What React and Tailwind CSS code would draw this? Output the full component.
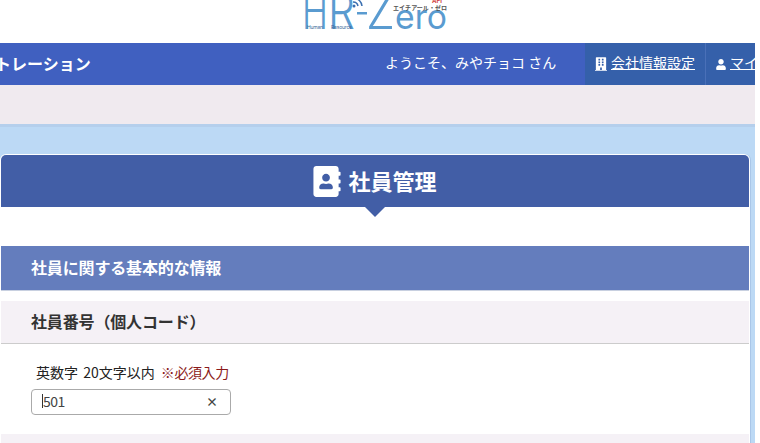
import { FaAddressBook, FaBuilding, FaUser } from "react-icons/fa";

const jp = "font-['Noto_Sans_CJK_JP','Noto_Sans',sans-serif]";

const Logo = () => (
    <div className="h-[43px] shrink-0 bg-white pl-[300px]">
        <svg width="152" height="43" viewBox="0 0 152 43" className="block font-['Inter',sans-serif]">
            <text x="2" y="29" fontSize="50" fontWeight="300" fill="#5a9bd0" textLength="26" lengthAdjust="spacingAndGlyphs">H</text>
            <text x="28" y="29" fontSize="50" fontWeight="300" fill="#5a9bd0" textLength="27" lengthAdjust="spacingAndGlyphs">R</text>
            <rect x="57" y="12" width="10" height="2.5" fill="#5a9bd0" />
            <text x="66" y="29" fontSize="50" fontWeight="300" fill="#5a9bd0" textLength="29" lengthAdjust="spacingAndGlyphs">Z</text>
            <text x="95" y="29" fontSize="35" fontWeight="400" fill="#5a9bd0" textLength="52" lengthAdjust="spacingAndGlyphs">ero</text>
            <text x="7" y="28.5" fontSize="5" fill="#3a6a9a" textLength="16">Human</text>
            <text x="31" y="28.5" fontSize="5" fill="#3a6a9a" textLength="21">Resource</text>
            <text x="93" y="10" fontSize="6" fontWeight="700" fill="#555555" className={jp} textLength="54">エイチアール・ゼロ</text>
            <text x="132" y="3" fontSize="6" fontWeight="700" fill="#d04040">API</text>
            <circle cx="54" cy="6" r="1.5" fill="#3a6fb0" />
            <path d="M53 2a5 5 0 0 1 5 4M54 -2a9 9 0 0 1 8 8" fill="none" stroke="#3a6fb0" strokeWidth="1.5" />
        </svg>
    </div>
);

const Header = () => (
    <div className="h-[42px] bg-[#4060c0] flex items-center text-white">
        <div className="font-bold text-[16px] -ml-[5px] w-[390px] whitespace-nowrap mb-[3px]">トレーション</div>
        <div className="text-[14px] w-[200px] whitespace-nowrap mb-[3px]">ようこそ、みやチョコ さん</div>
        <a className="h-full w-[121px] bg-[#3560aa] flex items-center gap-[4px] pl-[10px] text-[14px] border-r border-[#4a70b8]">
            <FaBuilding className="w-[12px] h-[14px] shrink-0" />
            <span className="underline whitespace-nowrap mb-[3px]">会社情報設定</span>
        </a>
        <a className="h-full w-[49px] bg-[#3560aa] flex items-center gap-[4px] pl-[10px] text-[14px] overflow-hidden">
            <FaUser className="w-[10px] h-[11px] shrink-0" />
            <span className="underline whitespace-nowrap mb-[3px]">マイページ</span>
        </a>
    </div>
);

export default function App() {
    return (
        <div className={"w-[760px] h-[443px] overflow-hidden bg-white flex flex-col " + jp}>
            <Logo />
            <div className="w-[755px] shrink-0">
                <Header />
                <div className="h-[39px] bg-[#f0eaef]" />
                <div className="h-[3px] bg-[#b5cfec]" />
            </div>
            <div className="w-[755px] flex-1 bg-[#bcd9f5] pt-[28px] pl-[1px] pr-[4px]">
                <div className="w-[748px] bg-white rounded-t-[5px] h-full shadow-[0_0_0_1px_#ffffff,1px_0_0_1px_#a9c6e8]">
                    <div className="relative h-[52px] bg-[#425ea6] rounded-t-[5px] flex items-center justify-center gap-[7px] text-white">
                        <FaAddressBook className="w-[28px] h-[31px]" />
                        <span className="text-[22px] font-bold mb-[1px]">社員管理</span>
                        <div className="absolute left-[364px] top-[52px] w-0 h-0 border-x-[10px] border-x-transparent border-t-[10px] border-t-[#425ea6]" />
                    </div>
                    <div className="pt-[39px]">
                        <div className="h-[45px] bg-[#647dbd] border-b border-[#c8d0e0] flex items-center pl-[30px] pb-[3px] text-white text-[16px] font-bold tracking-[-0.15px]">
                            社員に関する基本的な情報
                        </div>
                        <div className="mt-[10px] h-[43px] bg-[#f5f1f6] border-b border-[#cccccc] flex items-center pl-[30px] pb-[3px] text-[#333333] text-[16px] font-bold tracking-[-0.15px]">
                            社員番号（個人コード）
                        </div>
                        <div className="pt-[18px] pl-[35px] text-[14px] leading-[20px] text-[#222222] [word-spacing:2px]">
                            英数字 20文字以内 <span className="ml-[1px] tracking-[-0.4px] text-[#8b1a1a]">※必須入力</span>
                        </div>
                        <div className="mt-[7px] ml-[30px] w-[200px] h-[26px] bg-white border border-[#aaaaaa] rounded-[4px] flex items-center justify-between pl-[10px] pr-[12px] text-[14px] text-[#444444]">
                            <span className="border-l border-[#333333] leading-[14px] tracking-[-0.5px] mb-[3px]">501</span>
                            <span className="text-[12px] font-bold text-[#444444]">×</span>
                        </div>
                        <div className="mt-[19px] h-[20px] bg-[#f5f1f6]" />
                    </div>
                </div>
            </div>
        </div>
    );
}
